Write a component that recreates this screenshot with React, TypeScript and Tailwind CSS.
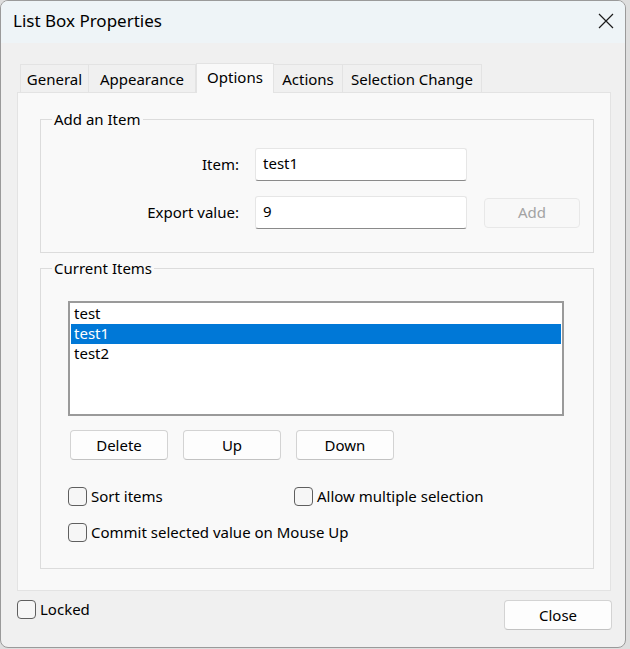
import React from 'react'

const tabs = [
  { label: 'General', w: 'w-[69px]' },
  { label: 'Appearance', w: 'w-[107px]' },
  { label: 'Options', w: 'w-[78px]', active: true },
  { label: 'Actions', w: 'w-[69px]' },
  { label: 'Selection Change', w: 'w-[139px]' },
]

const items = ['test', 'test1', 'test2']

const Checkbox = ({ label }: { label: string }) => (
  <label className="flex items-center h-[19px]">
    <span className="w-[19px] h-[19px] rounded-[4px] border border-[#5f5f5f] bg-[#f6f6f6] shrink-0" />
    <span className="ml-[4px] leading-none">{label}</span>
  </label>
)

const Button = ({ label, className = '' }: { label: string; className?: string }) => (
  <button
    type="button"
    className={`h-[30px] rounded-[4px] border border-[#d3d3d3] border-b-[#c2c2c2] bg-[#fdfdfd] text-black leading-none ${className}`}
  >
    {label}
  </button>
)

const TextInput = ({ value }: { value: string }) => (
  <div className="w-[212px] h-[33px] rounded-[3px] border border-[#e6e6e6] border-b-[#8a8a8a] bg-white pl-[7px] flex items-center">
    <span className="-mt-[3px]">{value}</span>
  </div>
)

export default function App() {
  return (
    <div className="w-[630px] h-[649px] bg-[#dedede] font-['Noto_Sans',sans-serif] text-[15px] text-black">
      <div className="w-[626px] h-[648px] rounded-[8px] border border-[#9a9a9a] bg-[#f0f0f0] overflow-hidden flex flex-col">
        {/* title bar */}
        <div className="h-[42px] bg-[#eef4f7] flex items-center justify-between pl-[12px] pr-[11px] shrink-0">
          <span className="text-[17px] -mt-[2px]">List Box Properties</span>
          <svg width="16" height="16" viewBox="0 0 16 16" className="-mt-[2px]">
            <path d="M1 1 L15 15 M15 1 L1 15" stroke="#1b1b1b" strokeWidth="1.2" fill="none" />
          </svg>
        </div>

        <div className="pl-[16px] pt-[19px]">
          {/* tabs */}
          <div className="flex items-end h-[30px] ml-[3px]">
            {tabs.map((t) =>
              t.active ? (
                <div
                  key={t.label}
                  className={`${t.w} h-[30px] -mb-px relative z-10 border border-b-0 border-[#e3e3e3] bg-[#f9f9f9] flex justify-center pt-[2px]`}
                >
                  {t.label}
                </div>
              ) : (
                <div
                  key={t.label}
                  className={`${t.w} h-[28px] border border-b-0 border-l-0 first:border-l border-[#e3e3e3] bg-[#f0f0f0] flex justify-center pt-[3px]`}
                >
                  {t.label}
                </div>
              )
            )}
          </div>

          {/* tab panel */}
          <div className="w-[594px] h-[499px] border border-[#e3e3e3] bg-[#f9f9f9] pl-[22px] pt-[16px]">
            <fieldset className="w-[554px] h-[144px] border border-[#dcdcdc]">
              <legend className="ml-[11px] px-[2px] leading-[20px]">Add an Item</legend>
              <div className="pt-[19px] flex flex-col gap-[15px]">
                <div className="flex items-center">
                  <span className="w-[198px] text-right">Item:</span>
                  <div className="ml-[16px]">
                    <TextInput value="test1" />
                  </div>
                </div>
                <div className="flex items-center">
                  <span className="w-[198px] text-right">Export value:</span>
                  <div className="ml-[16px]">
                    <TextInput value="9" />
                  </div>
                  <button
                    type="button"
                    className="ml-[17px] w-[96px] h-[30px] rounded-[4px] border border-[#e8e8e8] bg-[#f8f8f8] text-[#a3a3a3] leading-none"
                  >
                    Add
                  </button>
                </div>
              </div>
            </fieldset>

            <fieldset className="mt-[5px] w-[554px] h-[311px] border border-[#dcdcdc]">
              <legend className="ml-[11px] px-[2px] leading-[20px]">Current Items</legend>
              <div className="pl-[27px] pt-[23px]">
                <div className="w-[496px] h-[115px] border-2 border-[#9a9a9a] bg-white pt-[1px] px-[1px]">
                  {items.map((it) => (
                    <div
                      key={it}
                      className={`h-[20px] pl-[3px] leading-[18px] ${it === 'test1' ? 'bg-[#0078d7] text-white' : ''}`}
                    >
                      {it}
                    </div>
                  ))}
                </div>

                <div className="mt-[14px] ml-[2px] flex gap-[15px]">
                  <Button label="Delete" className="w-[98px]" />
                  <Button label="Up" className="w-[98px]" />
                  <Button label="Down" className="w-[98px]" />
                </div>

                <div className="mt-[27px] grid grid-cols-[226px_1fr] gap-y-[17px]">
                  <Checkbox label="Sort items" />
                  <Checkbox label="Allow multiple selection" />
                  <div className="col-span-2">
                    <Checkbox label="Commit selected value on Mouse Up" />
                  </div>
                </div>
              </div>
            </fieldset>
          </div>

          {/* footer */}
          <div className="mt-[9px] w-[594px] flex items-start justify-between">
            <Checkbox label="Locked" />
            <Button label="Close" className="w-[108px] -mr-[1px]" />
          </div>
        </div>
      </div>
    </div>
  )
}
